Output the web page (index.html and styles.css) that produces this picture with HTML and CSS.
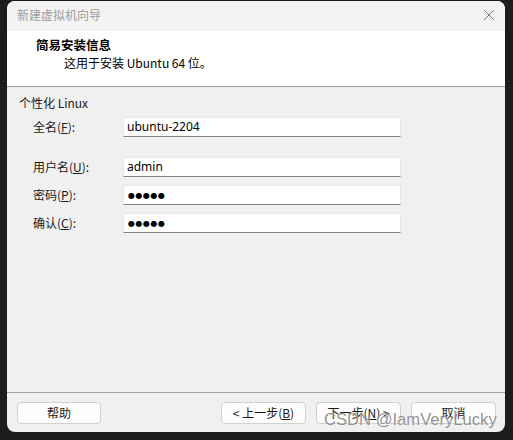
FILE: index.html
```html
<!DOCTYPE html>
<html lang="zh-CN">
<head>
<meta charset="utf-8">
<title>新建虚拟机向导</title>
<link rel="stylesheet" href="styles.css">
</head>
<body>
<div class="window">
  <div class="titlebar">
    <span class="title">新建虚拟机向导</span>
    <svg class="close" width="12" height="12" viewBox="0 0 12 12"><path d="M1 1L11 11M11 1L1 11" stroke="#7a7a7a" stroke-width="1" fill="none"/></svg>
  </div>
  <div class="header">
    <div class="h-title">简易安装信息</div>
    <div class="h-sub">这用于安装 Ubuntu 64 位。</div>
  </div>
  <div class="content">
    <div class="group">个性化 Linux</div>
    <div class="form">
      <div class="row first">
        <span class="label">全名(<u>F</u>):</span>
        <div class="field">ubuntu-2204</div>
      </div>
      <div class="row gap">
        <span class="label">用户名(<u>U</u>):</span>
        <div class="field">admin</div>
      </div>
      <div class="row">
        <span class="label">密码(<u>P</u>):</span>
        <div class="field dots">●●●●●</div>
      </div>
      <div class="row">
        <span class="label">确认(<u>C</u>):</span>
        <div class="field dots">●●●●●</div>
      </div>
    </div>
  </div>
  <div class="footer">
    <button class="btn">帮助</button>
    <div class="spacer"></div>
    <button class="btn">&lt; 上一步(<u>B</u>)</button>
    <button class="btn">下一步(<u>N</u>) &gt;</button>
    <button class="btn">取消</button>
  </div>
  <div class="watermark">CSDN @IamVeryLucky</div>
</div>
</body>
</html>
```
FILE: styles.css
```css
html, body {
  margin: 0;
  padding: 0;
  background: #1c1c1c;
}
body {
  width: 513px;
  height: 440px;
  overflow: hidden;
  font-family: "Noto Sans", "Noto Sans CJK SC", sans-serif;
  font-size: 12px;
  color: #1a1a1a;
}
.window {
  position: relative;
  margin: 1px 8px 0 7px;
  width: 498px;
  height: 431px;
  background: #f0f0f0;
  border-radius: 8px;
  overflow: hidden;
  display: flex;
  flex-direction: column;
}
.titlebar {
  height: 30px;
  flex: none;
  background: #f3f3f3;
  display: flex;
  align-items: center;
  padding: 0 10px 0 10px;
}
.title {
  color: #9b9b9b;
  font-family: "Noto Sans CJK SC", sans-serif;
  font-size: 12px;
  line-height: 16px;
  flex: 1;
  margin-top: -2px;
}
.close {
  display: block;
  margin-top: -2px;
}
.header {
  height: 56px;
  flex: none;
  background: #ffffff;
  border-bottom: 1px solid #a0a0a0;
  box-sizing: border-box;
  padding: 6px 0 0 29px;
  font-family: "Noto Sans CJK SC", sans-serif;
}
.h-title {
  font-weight: bold;
  font-size: 12.5px;
  line-height: 16px;
  color: #000;
}
.h-sub {
  margin-top: 2px;
  padding-left: 28px;
  line-height: 16px;
  color: #000;
}
.content {
  flex: 1;
  padding: 8px 0 0 12px;
  border-bottom: 1px solid #a0a0a0;
  font-family: "Noto Sans CJK SC", sans-serif;
}
.group {
  line-height: 16px;
}
.form {
  padding-left: 14px;
  margin-top: 6px;
  display: flex;
  flex-direction: column;
  gap: 8px;
}
.row {
  display: flex;
  align-items: center;
  height: 20px;
}
.row.gap {
  margin-top: 12px;
}
.label {
  width: 90px;
  line-height: 16px;
}
.field {
  width: 278px;
  height: 20px;
  box-sizing: border-box;
  background: #fff;
  border: 1px solid #e6e6e6;
  border-bottom: 1px solid #868686;
  padding: 0 0 0 3px;
  line-height: 18px;
  font-family: "Noto Sans", sans-serif;
  font-size: 12px;
  color: #000;
}
.field.dots {
  font-family: "DejaVu Sans", sans-serif;
  font-size: 8px;
  letter-spacing: 0.5px;
  line-height: 19px;
  padding-left: 4px;
}
.footer {
  height: 39px;
  flex: none;
  box-sizing: border-box;
  padding: 9px 9px 0 10px;
  display: flex;
  align-items: flex-start;
  gap: 10px;
}
.spacer {
  flex: 1;
}
.btn {
  width: 85px;
  height: 22px;
  box-sizing: border-box;
  background: #fdfdfd;
  border: 1px solid #d0d0d0;
  border-radius: 4px;
  font-family: "Noto Sans CJK SC", sans-serif;
  font-size: 12px;
  color: #1a1a1a;
  padding: 0;
  line-height: 18px;
}
.footer .btn:first-child {
  width: 84px;
}
.watermark {
  position: absolute;
  left: 317px;
  top: 409px;
  font-family: "Liberation Sans", Arial, sans-serif;
  font-size: 16.6px;
  line-height: 20px;
  color: rgba(110, 110, 110, 0.75);
  text-shadow: 0 0 1px rgba(255,255,255,0.8);
  white-space: nowrap;
}
```
